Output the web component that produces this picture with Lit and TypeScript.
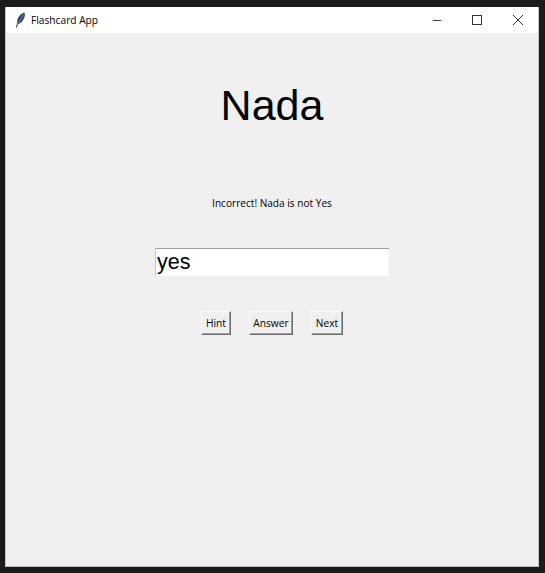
import { LitElement, html, css, svg } from "lit";
import { customElement } from "lit/decorators.js";

@customElement("app-root")
export class AppRoot extends LitElement {
  static styles = css`
    :host {
      display: block;
      width: 545px;
      height: 573px;
      background: #1b1b1b;
      padding: 7px 6px 6px 5px;
      box-sizing: border-box;
      font-family: "Open Sans", "Noto Sans", sans-serif;
    }
    .window {
      height: 560px;
      width: 534px;
      background: #f0f0f0;
      display: flex;
      flex-direction: column;
      box-sizing: border-box;
      border-bottom: 1px solid #b8b8b8;
      border-left: 1px solid #c4c4c4;
      border-right: 1px solid #c4c4c4;
    }
    .titlebar {
      height: 26px;
      background: #fff;
      display: flex;
      align-items: center;
      flex: none;
    }
    .feather {
      width: 12px;
      height: 16px;
      margin-left: 8px;
      margin-right: 5px;
      margin-bottom: 1px;
      flex: none;
    }
    .title {
      font-size: 10.2px;
      color: #000;
      flex: 1;
      line-height: 12px;
      margin-bottom: 1px;
    }
    .ctl {
      width: 40px;
      height: 26px;
      display: flex;
      align-items: center;
      justify-content: center;
      flex: none;
    }
    .ctl:last-child { margin-left: 1px; }
    .ctl svg { width: 12px; height: 12px; display: block; }
    .ctls { display: flex; }
    .content {
      flex: 1;
      display: flex;
      flex-direction: column;
      align-items: center;
    }
    .word {
      font-family: "Liberation Sans", Arial, sans-serif;
      font-size: 43px;
      line-height: 52px;
      color: #000;
      margin-top: 46px;
    }
    .msg {
      font-size: 10.1px;
      line-height: 14px;
      color: #000;
      margin-top: 65px;
    }
    .entry {
      margin-top: 38px;
      width: 234px;
      height: 28px;
      box-sizing: border-box;
      background: #fff;
      border-top: 1px solid #a0a0a0;
      border-left: 1px solid #c8c8c8;
      font-family: "Liberation Sans", Arial, sans-serif;
      font-size: 21.5px;
      line-height: 26px;
      color: #000;
      padding-left: 1px;
    }
    .buttons {
      display: grid;
      grid-template-columns: 30px 44px 32px;
      gap: 18px;
      margin-top: 35px;
    }
    .btn {
      height: 24px;
      box-sizing: border-box;
      background: #f0f0f0;
      border: 1px solid;
      border-color: #fafafa #6d6d6d #6d6d6d #fafafa;
      box-shadow: inset -1px -1px 0 #a0a0a0;
      font-family: inherit;
      font-size: 10.2px;
      color: #000;
      display: flex;
      align-items: center;
      justify-content: center;
    }
  `;

  render() {
    const feather = svg`<path d="M10.6 0.5 C7.5 1 4 4.5 3.2 9 L3 11.5 L2 15.5 L3 15.7 L4 12.2 C7.5 11.5 10 7.5 10.9 3.5 Z" fill="#2f4468"/><path d="M9.6 2.5 L3.6 12.2" stroke="#9fb2cc" stroke-width="0.6" fill="none"/>`;
    return html`
      <div class="window">
        <div class="titlebar">
          <svg class="feather" viewBox="0 0 12 16">${feather}</svg>
          <span class="title">Flashcard App</span>
          <div class="ctls">
            <div class="ctl"><svg viewBox="0 0 12 12"><path d="M1.5 6.5 H10.5" stroke="#444" stroke-width="1"/></svg></div>
            <div class="ctl"><svg viewBox="0 0 12 12"><rect x="1.5" y="1.5" width="9" height="9" fill="none" stroke="#333" stroke-width="1"/></svg></div>
            <div class="ctl"><svg viewBox="0 0 12 12"><path d="M1 1 L11 11 M11 1 L1 11" stroke="#333" stroke-width="1" fill="none"/></svg></div>
          </div>
        </div>
        <div class="content">
          <div class="word">Nada</div>
          <div class="msg">Incorrect! Nada is not Yes</div>
          <div class="entry">yes</div>
          <div class="buttons">
            <div class="btn">Hint</div>
            <div class="btn">Answer</div>
            <div class="btn">Next</div>
          </div>
        </div>
      </div>
    `;
  }
}
